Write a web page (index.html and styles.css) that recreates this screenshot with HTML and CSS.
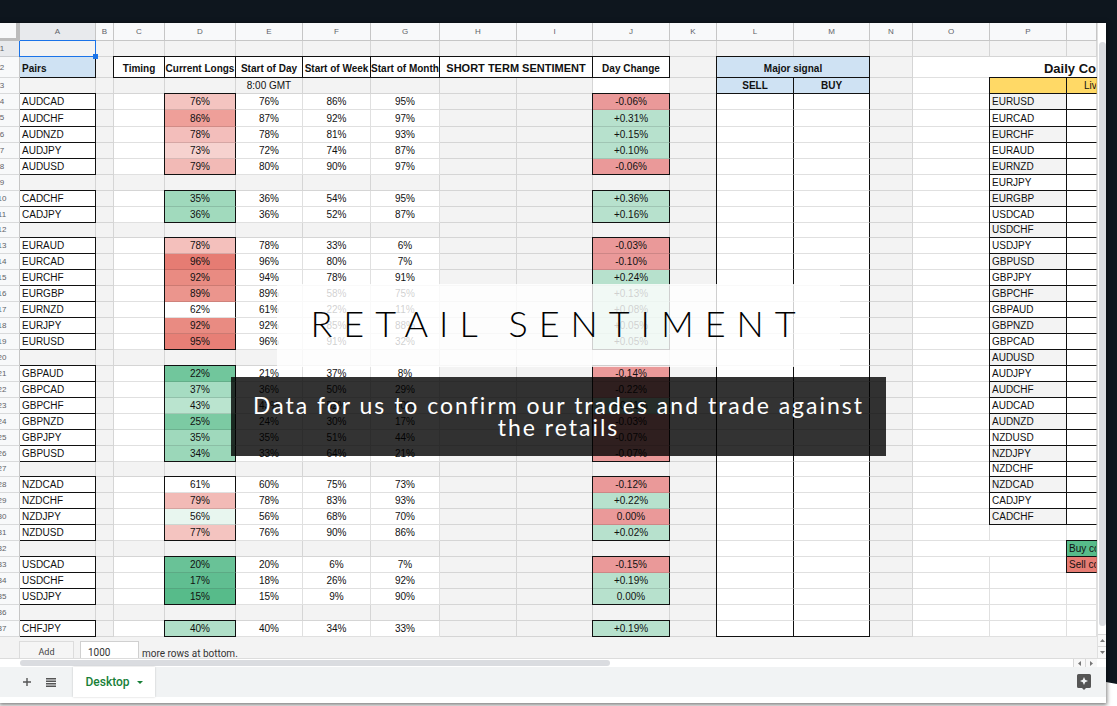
FILE: index.html
```html
<!DOCTYPE html>
<html lang="en">
<head>
<meta charset="utf-8">
<title>Retail Sentiment</title>
<link rel="stylesheet" href="styles.css">
</head>
<body>
<section class="hero">
  <div class="window">
    <div class="viewport">
      <div class="pane">
        <table class="grid">
          <colgroup>
            <col class="w-num"><col class="w-76"><col class="w-18"><col class="w-51"><col class="w-71"><col class="w-67"><col class="w-68"><col class="w-69"><col class="w-77"><col class="w-76"><col class="w-77"><col class="w-47"><col class="w-77"><col class="w-76"><col class="w-43"><col class="w-77"><col class="w-77"><col>
          </colgroup>
          <thead>
            <tr><th class="corner"></th><th class="active">A</th><th>B</th><th>C</th><th>D</th><th>E</th><th>F</th><th>G</th><th>H</th><th>I</th><th>J</th><th>K</th><th>L</th><th>M</th><th>N</th><th>O</th><th>P</th><th></th></tr>
          </thead>
          <tbody id="rows"></tbody>
        </table>
        <form class="add-rows">
          <button type="button">Add</button>
          <input id="count" type="text" value="1000">
          <label for="count">more rows at bottom.</label>
        </form>
      </div>
      <div class="vscroll">
        <div class="vtrack"><div class="vthumb"></div></div>
        <button type="button" aria-label="Scroll up"><svg width="5" height="3" viewBox="0 0 5 3"><path d="M0 3 2.500 0 5 3z"/></svg></button>
        <button type="button" aria-label="Scroll down"><svg width="5" height="3" viewBox="0 0 5 3"><path d="M0 0h5L2.500 3z"/></svg></button>
      </div>
    </div>
    <div class="hscroll">
      <div class="htrack"><div class="hthumb"></div></div>
      <button type="button" aria-label="Scroll left"><svg width="3" height="5" viewBox="0 0 3 5"><path d="M3 0v5L0 2.500z"/></svg></button>
      <button type="button" aria-label="Scroll right"><svg width="3" height="5" viewBox="0 0 3 5"><path d="M0 0v5l3-2.500z"/></svg></button>
    </div>
    <div class="tabs">
      <button type="button" class="icon" aria-label="Add sheet"><svg width="8" height="8" viewBox="0 0 8 8"><path d="M3.300 0h1.400v3.300H8v1.400H4.700V8H3.300V4.700H0V3.300h3.300z"/></svg></button>
      <button type="button" class="icon" aria-label="All sheets"><svg width="10" height="9" viewBox="0 0 10 9"><path d="M0 0h10v1.500H0zM0 2.500h10V4H0zM0 5h10v1.500H0zM0 7.500h10V9H0z"/></svg></button>
      <button type="button" class="tab">Desktop <svg width="6" height="3" viewBox="0 0 6 3"><path d="M0 0h6L3 3z"/></svg></button>
      <button type="button" class="explore" aria-label="Explore"><svg width="14" height="16" viewBox="0 0 14 16"><path fill-rule="evenodd" d="M1.500 0h11A1.500 1.500 0 0 1 14 1.500v11a1.500 1.500 0 0 1-1.500 1.500H9l-2 2-2-2H1.500A1.500 1.500 0 0 1 0 12.500v-11A1.500 1.500 0 0 1 1.500 0zM7 3 5.800 5.800 3 7l2.800 1.200L7 11l1.200-2.800L11 7 8.200 5.800z"/></svg></button>
    </div>
  </div>
  <div class="caption">
    <h1>RETAIL SENTIMENT</h1>
    <p>Data for us to confirm our trades and trade against the retails</p>
  </div>
</section>
<script src="script.js"></script>
</body>
</html>
```
FILE: styles.css
```css
* { box-sizing: border-box; }
body {
  margin: 0;
  background: #fff;
  font-family: "Liberation Sans", Arial, sans-serif;
}
button, input { font: inherit; margin: 0; padding: 0; border: 0; background: none; }

.hero { position: relative; overflow: hidden; padding: 23px 11px 3px 0; }
.hero::before {
  content: "";
  position: absolute;
  inset: 0 0 22px 0;
  background: #0e161e;
  clip-path: polygon(0 0, 100% 0, 100% 100%, calc(100% - 11px) calc(100% - 2px), 0 calc(100% - 100px));
}
.window {
  position: relative;
  background: #fff;
  padding-bottom: 6px;
  box-shadow: 0 1px 4px 1px rgba(0, 0, 0, .5);
}
.viewport { display: flex; border-bottom: 1px solid #dcdcdc; }
.pane { flex: 1; min-width: 0; overflow: hidden; background: #f3f3f3; }

/* grid */
.grid {
  width: calc(100% + 15px);
  margin-left: -15px;
  table-layout: fixed;
  border-collapse: separate;
  border-spacing: 0;
  font-size: 10px;
  line-height: 15px;
  color: #111;
}
.w-num { width: 35px; }
.w-18 { width: 18px; }
.w-43 { width: 43px; }
.w-47 { width: 47px; }
.w-51 { width: 51px; }
.w-67 { width: 67px; }
.w-68 { width: 68px; }
.w-69 { width: 69px; }
.w-71 { width: 71px; }
.w-76 { width: 76px; }
.w-77 { width: 77px; }
.grid th, .grid td {
  height: 16px;
  padding: 0;
  border-right: 1px solid rgba(0, 0, 0, .12);
  border-bottom: 1px solid rgba(0, 0, 0, .12);
  text-align: center;
  white-space: nowrap;
  overflow: hidden;
}
.grid thead th {
  height: 18px;
  background: #f8f9fa;
  border-color: #c6c6c6;
  color: #5f6368;
  font-size: 8px;
  font-weight: 400;
}
.grid thead .corner { border-right: 4px solid #bcbcbc; border-bottom: 3px solid #bcbcbc; }
.grid tbody th {
  background: #f8f9fa;
  border-right-color: #c6c6c6;
  color: #5f6368;
  font-size: 8px;
  font-weight: 400;
  line-height: 12px;
}
.grid thead .active, .grid tbody .active { background: #e8eaed; }
.grid .tall td, .grid .tall th { height: 21px; padding-top: 2px; }
.grid .plus td { height: 17px; padding-top: 1px; }
.grid .minus td, .grid .minus th { height: 15px; line-height: 14px; }

.grid .white { background: #fff; }
.grid .shade { background: #f3f3f3; }
.grid .blue { background: #cfe2f3; font-weight: 700; }
.grid .gold { background: #ffd966; }
.grid .red { background: #ea9999; }
.grid .green { background: #b7e1cd; }
.grid .buy { background: #57bb8a; }
.grid .sell { background: #e67c73; }
.grid .head { background: #fff; font-weight: 700; }
.grid .wide { font-size: 11px; }
.grid .title { background: #fff; font-size: 13px; font-weight: 700; text-align: right; }
.grid .left { text-align: left; padding-left: 2px; }
.grid .live { text-align: left; padding-left: 17px; }

/* solid outlines: right and bottom are borders, top and left fall on the neighbouring lines */
.grid .bt { box-shadow: 0 -1px #111; }
.grid .bl { box-shadow: -1px 0 #111; }
.grid .bt.bl { box-shadow: -1px 0 #111, 0 -1px #111, -1px -1px #111; }
.grid .br { border-right-color: #111; }
.grid .bb { border-bottom-color: #111; }

.grid .selected {
  position: relative;
  overflow: visible;
  border-color: #1a73e8;
  box-shadow: -1px 0 #1a73e8, 0 -1px #1a73e8;
}
.selected::after {
  content: "";
  position: absolute;
  right: -3px;
  bottom: -3px;
  width: 5px;
  height: 5px;
  background: #1a73e8;
}

/* footer of the grid */
.add-rows {
  display: flex;
  align-items: flex-start;
  height: 21px;
  padding: 4px 0 0 19px;
  overflow: hidden;
  font-family: Roboto, sans-serif;
  font-size: 10px;
  color: #333;
}
.add-rows button { width: 55px; height: 22px; border: 1px solid #dcdcdc; background: #f5f5f5; font-size: 9px; color: #444; }
.add-rows input { width: 59px; height: 22px; margin-left: 6px; padding-left: 7px; border: 1px solid #d0d0d0; background: #fff; color: #333; }
.add-rows label { margin-left: 3px; padding-top: 6px; line-height: 14px; }

/* scroll bars */
.vscroll { display: flex; flex-direction: column; width: 9px; border-left: 1px solid #e0e0e0; background: #fff; }
.vtrack { flex: 1; display: flex; padding: 19px 0 8px 1px; background: #fff; }
.vthumb { flex: 1; border-radius: 4px; background: #dadce0; }
.vscroll button, .hscroll button { display: flex; align-items: center; justify-content: center; background: #f8f8f8; fill: #777; }
.vscroll button { height: 12px; border-top: 1px solid #d8d8d8; }
.hscroll { display: flex; height: 8px; padding-right: 9px; }
.hscroll button { width: 12px; border-left: 1px solid #d8d8d8; }
.htrack { flex: 1; padding: 1px 0 0 20px; }
.hthumb { width: 56%; height: 6px; border-radius: 3px; background: #dadce0; }

/* sheet tabs */
.tabs {
  display: flex;
  align-items: center;
  height: 30px;
  padding: 0 15px 0 15px;
  background: #f1f3f4;
  fill: #555;
}
.tabs button { display: flex; align-items: center; justify-content: center; height: 30px; }
.icon { width: 24px; }
.tabs .tab {
  gap: 7px;
  width: 82px;
  margin-left: 10px;
  background: #fff;
  box-shadow: 0 0 2px rgba(0, 0, 0, .2);
  font-family: Roboto, sans-serif;
  font-size: 12px;
  font-weight: 500;
  color: #188038;
  fill: #188038;
}
.explore { margin-left: auto; }

/* caption over the grid */
.caption {
  position: absolute;
  top: 284px;
  left: 0;
  right: 0;
  display: flex;
  flex-direction: column;
  align-items: center;
  gap: 10px;
  font-family: Lato, sans-serif;
  text-align: center;
}
.caption h1 {
  margin: 0;
  padding: 18px 33px 22px;
  background: rgba(255, 255, 255, .8);
  font-size: 36px;
  line-height: 43px;
  font-weight: 300;
  letter-spacing: 11px;
  white-space: nowrap;
  color: #000;
}
.caption p {
  max-width: 655px;
  margin: 0;
  padding: 17px 20px 18px;
  background: rgba(0, 0, 0, .8);
  font-size: 23px;
  line-height: 22px;
  letter-spacing: 2px;
  color: #fff;
}
```
FILE: script.js
```javascript
// pair, current longs, its colour, day, week, month, day change, change colour; null is a spacer row
const data = [
  ['AUDCAD', 76, '#f4c4c0', 76, 86, 95, '-0.06%', 'red'],
  ['AUDCHF', 86, '#ee9f99', 87, 92, 97, '+0.31%', 'green'],
  ['AUDNZD', 78, '#f3bebb', 78, 81, 93, '+0.15%', 'green'],
  ['AUDJPY', 73, '#f6d2cf', 72, 74, 87, '+0.10%', 'green'],
  ['AUDUSD', 79, '#f2bab6', 80, 90, 97, '-0.06%', 'red'],
  null,
  ['CADCHF', 35, '#9fd9bc', 36, 54, 95, '+0.36%', 'green'],
  ['CADJPY', 36, '#a1dabd', 36, 52, 87, '+0.16%', 'green'],
  null,
  ['EURAUD', 78, '#f4c0bc', 78, 33, 6, '-0.03%', 'red'],
  ['EURCAD', 96, '#e67c73', 96, 80, 7, '-0.10%', 'red'],
  ['EURCHF', 92, '#e98b82', 94, 78, 91, '+0.24%', 'green'],
  ['EURGBP', 89, '#eb958d', 89, 58, 75, '+0.13%', 'green'],
  ['EURNZD', 62, '#ffffff', 61, 22, 11, '+0.08%', 'green'],
  ['EURJPY', 92, '#e98b82', 92, 85, 88, '+0.05%', 'green'],
  ['EURUSD', 95, '#e77f76', 96, 91, 32, '+0.05%', 'green'],
  null,
  ['GBPAUD', 22, '#71c69c', 21, 37, 8, '-0.14%', 'red'],
  ['GBPCAD', 37, '#a6dcc2', 36, 50, 29, '-0.22%', 'red'],
  ['GBPCHF', 43, '#bae4cf', 43, 52, 60, '+0.11%', 'green'],
  ['GBPNZD', 25, '#7ccaa3', 24, 30, 17, '-0.03%', 'red'],
  ['GBPJPY', 35, '#9fd9bc', 35, 51, 44, '-0.07%', 'red'],
  ['GBPUSD', 34, '#9bd7b9', 33, 64, 21, '-0.07%', 'red'],
  null,
  ['NZDCAD', 61, '#ffffff', 60, 75, 73, '-0.12%', 'red'],
  ['NZDCHF', 79, '#f2bab6', 78, 83, 93, '+0.22%', 'green'],
  ['NZDJPY', 56, '#e8f6ef', 56, 68, 70, '0.00%', 'red'],
  ['NZDUSD', 77, '#f4c4c0', 76, 90, 86, '+0.02%', 'green'],
  null,
  ['USDCAD', 20, '#69c297', 20, 6, 7, '-0.15%', 'red'],
  ['USDCHF', 17, '#60be91', 18, 26, 92, '+0.19%', 'green'],
  ['USDJPY', 15, '#57bb8a', 15, 9, 90, '0.00%', 'green'],
  null,
  ['CHFJPY', 40, '#b0dfc8', 40, 34, 33, '+0.19%', 'green']
];
const live = ('EURUSD EURCAD EURCHF EURAUD EURNZD EURJPY EURGBP USDCAD USDCHF USDJPY GBPUSD GBPJPY GBPCHF ' +
  'GBPAUD GBPNZD GBPCAD AUDUSD AUDJPY AUDCHF AUDCAD AUDNZD NZDUSD NZDJPY NZDCHF NZDCAD CADJPY CADCHF').split(' ');

const cell = (text = '', cls = '', attr = '') => `<td class="${cls}" ${attr}>${text}</td>`;
const blanks = (n, cls = '') => cell('', cls).repeat(n);
const row = (n, cells, cls = '') => `<tr class="${cls}"><th class="${n === 1 ? 'active' : ''}">${n}</th>${cells}</tr>`;
const head = text => cell(text, 'head bt bl br bb');

const out = [
  row(1, cell('', 'selected') + blanks(16)),
  row(2,
    cell('Pairs', 'blue left br bb') + cell() +
    ['Timing', 'Current Longs', 'Start of Day', 'Start of Week', 'Start of Month'].map(head).join('') +
    cell('SHORT TERM SENTIMENT', 'head wide bt bl br bb', 'colspan="2"') + head('Day Change') + cell() +
    cell('Major signal', 'blue bt bl br bb', 'colspan="2"') + cell() +
    cell('Daily Co', 'title', 'colspan="3"'), 'tall'),
  row(3,
    blanks(4) + cell('8:00 GMT') + blanks(4) + cell('', 'white') + cell() +
    cell('SELL', 'blue bl br bb') + cell('BUY', 'blue br bb') + cell() + cell('', 'white') +
    cell('', 'gold bt bl br bb') + cell('Live', 'gold live bt bb'))
];

data.forEach((d, i) => {
  const n = i + 4;
  const first = d && !data[i - 1];
  const last = d && !data[i + 1];
  const edge = (first ? ' bt' : '') + (last ? ' bb' : '');
  let cells;
  if (d) {
    const [pair, longs, tint, day, week, month, change, tone] = d;
    cells = cell(pair, 'white left br bb' + (first ? ' bt' : '')) + cell() + cell('', 'white') +
      cell(longs + '%', 'bl br' + edge, `style="background:${tint}"`) +
      [day, week, month].map(v => cell(v + '%', 'white')).join('') + blanks(2) +
      cell(change, tone + ' bl br' + edge);
  } else {
    cells = blanks(10);
  }
  const end = n === 37 ? ' bb' : '';
  cells += cell() + cell('', 'white bl br' + end) + cell('', 'white br' + end) + cell();
  if (n <= 30) {
    cells += cell('', 'white') + cell(live[i], (n % 2 ? 'white' : 'shade') + ' left bl br bb') + cell('', 'white bb');
  } else if (n === 32) {
    cells += cell('', 'white', 'colspan="2"') + cell('Buy co', 'buy left bt bl bb');
  } else if (n === 33) {
    cells += blanks(2, 'white') + cell('Sell co', 'sell left bl bb');
  } else {
    cells += blanks(3, 'white');
  }
  out.push(row(n, cells, n === 5 ? 'plus' : n === 12 || n === 27 ? 'minus' : ''));
});

document.getElementById('rows').innerHTML = out.join('');
```
